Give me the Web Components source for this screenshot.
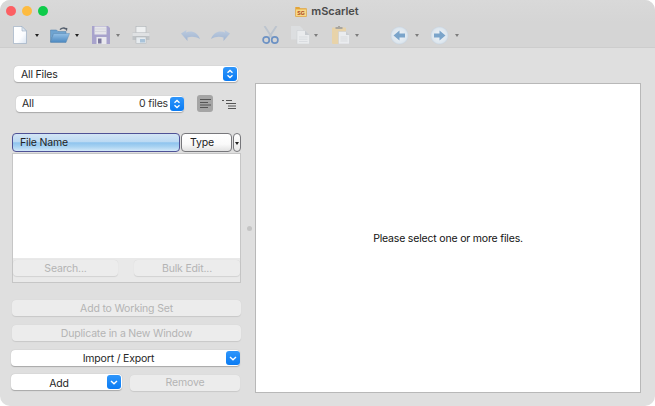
<!DOCTYPE html>
<html lang="en"><head><meta charset="utf-8"><title>mScarlet</title>
<style>
html,body{margin:0;padding:0;background:#fff;width:655px;height:406px;overflow:hidden}
body{font:10.5px/1 Inter,"Liberation Sans",sans-serif;letter-spacing:-.18px;color:#222}
</style></head><body>
<app-window>
  <title-bar slot="top"></title-bar>
  <tool-bar slot="top"></tool-bar>
  <side-panel slot="left"></side-panel>
  <preview-panel slot="right">Please select one or more files.</preview-panel>
</app-window>
<script>
const el=(name,html)=>customElements.define(name,class extends HTMLElement{
  constructor(){super();this.attachShadow({mode:'open'}).innerHTML=typeof html==='function'?html(this):html;}
});
el('app-window',`<style>
:host{display:flex;flex-direction:column;width:655px;height:406px;border-radius:10px;overflow:hidden;background:#dfdfdf}
.main{flex:1;display:flex;min-height:0}
</style><slot name="top"></slot><div class="main"><slot name="left"></slot><slot name="right"></slot></div>`);
el('title-bar',`<style>
:host{display:flex;height:22px;position:relative;align-items:center;justify-content:center;background:linear-gradient(#d9d9d9,#d5d5d5);box-sizing:border-box;padding-top:0}
.lights{position:absolute;left:6px;top:6px;display:flex;gap:6px}
.lights i{width:10px;height:10px;border-radius:50%;display:block}
.t{display:flex;align-items:center;gap:4px;font-weight:600;font-size:11px;letter-spacing:-.05px;color:#4a4a4a;margin-left:-1px}
</style><div class="lights"><i style="background:#fc5f63"></i><i style="background:#fdbb40"></i><i style="background:#0ecb4a"></i></div>
<div class="t"><svg width="12" height="11" viewBox="0 0 12 11"><path d="M.3 1h4l1 1.200h6.400v8.500H.3z" fill="#e3a437"/><rect x="1" y="3.400" width="10" height="6.600" fill="#f7d987"/><text x="6" y="8.500" font-size="5.200" font-weight="700" text-anchor="middle" fill="#a8401c" font-family="Liberation Sans" letter-spacing="0">SG</text></svg><span>mScarlet</span></div>`);
const G=`<defs>
<linearGradient id="pg" x1="0" y1="0" x2="1" y2="1"><stop offset="0" stop-color="#fff"/><stop offset=".6" stop-color="#fbfcfe"/><stop offset="1" stop-color="#d9e4f2"/></linearGradient>
<linearGradient id="fg" x1="0" y1="0" x2="0" y2="1"><stop offset="0" stop-color="#93c0e6"/><stop offset="1" stop-color="#4b88c0"/></linearGradient>
<linearGradient id="ug" x1="0" y1="0" x2="0" y2="1"><stop offset="0" stop-color="#bccbdf"/><stop offset="1" stop-color="#a1b5d1"/></linearGradient>
<radialGradient id="cg" cx=".5" cy=".5" r=".55"><stop offset="0" stop-color="#f0f4f8"/><stop offset=".75" stop-color="#dde6ee"/><stop offset="1" stop-color="#bac8d6"/></radialGradient></defs>`;
const I={
doc:`<svg width="14" height="18" viewBox="0 0 14 18">${G}<path d="M.5.5h8.500l4.500 4.500v12.500H.5z" fill="url(#pg)" stroke="#9fb0c4" stroke-width=".7"/><path d="M9 .5V5h4.500z" fill="#dfe7f1" stroke="#9fb0c4" stroke-width=".6"/></svg>`,
open:`<svg width="20" height="16" viewBox="0 0 20 16">${G}<path d="M.5 3h6l1.500 1.500h8V8H3L.5 15z" fill="#6ea3d0" stroke="#4f7fa8" stroke-width=".5"/><path d="M3.500 6.500h16L16 15.500H.5z" fill="url(#fg)" stroke="#4f7fa8" stroke-width=".4"/><path d="M10 2.600C11.500.8 14 .5 15.600 1.900" fill="none" stroke="#56606e" stroke-width="1.300"/><path d="M14.200.7l3.200.2-.4 3.400z" fill="#56606e"/></svg>`,
save:`<svg width="18" height="18" viewBox="0 0 18 18"><path d="M0 0h16l2 2v16H0z" fill="#a8a3cc"/><rect x="2.500" y=".5" width="12" height="8" fill="#e6e6ea"/><path d="M2.500 3h12M2.500 5.500h12" stroke="#cfcfd8" stroke-width=".7"/><rect x="4.500" y="11" width="10" height="7" fill="#e9e9ee"/><rect x="6" y="12.500" width="3.500" height="5" fill="#7d799f"/></svg>`,
print:`<svg width="18" height="18" viewBox="0 0 18 18"><rect x="4" y=".5" width="10" height="6.500" fill="#eef0f1" stroke="#b0b4b8" stroke-width=".6"/><path d="M.5 6.500h17v7.500H.5z" fill="#bfc3c6"/><rect x=".5" y="7" width="17" height="3" fill="#dfe1e3"/><rect x="4" y="11" width="10" height="6.500" fill="#e6ebef" stroke="#adb1b5" stroke-width=".5"/><rect x="8" y="13" width="5" height="3.500" fill="#a9c3d9"/></svg>`,
undo:`<svg width="19" height="11" viewBox="0 0 19 11">${G}<path d="M0 3.500 5.500 0 5 2.500C10 .5 16 1.500 19 9 15 6.500 10 6.300 6.500 7.500L6.500 11z" fill="url(#ug)"/></svg>`,
redo:`<svg width="19" height="11" viewBox="0 0 19 11">${G}<path d="M19 3.500 13.500 0 14 2.500C9 .5 3 1.500 0 9 4 6.500 9 6.300 12.500 7.500L12.500 11z" fill="url(#ug)"/></svg>`,
cut:`<svg width="17" height="18" viewBox="0 0 17 18"><path d="M2.500 0 10 11.500M14.500 0 7 11.500" stroke="#bcc4ce" stroke-width="1.900" fill="none"/><circle cx="4.200" cy="14" r="3.100" fill="none" stroke="#6d92c4" stroke-width="1.700"/><circle cx="12.800" cy="14" r="3.100" fill="none" stroke="#6d92c4" stroke-width="1.700"/></svg>`,
copy:`<svg width="19" height="18" viewBox="0 0 19 18"><path d="M0 0h9l3 3v10.500H0z" fill="#dcdee0"/><path d="M6 4.500h8l4.500 4.500v9H6z" fill="#e9ebed" stroke="#c8ccd0" stroke-width=".5"/><path d="M14 4.500V9h4.500z" fill="#c6cace"/><path d="M8 11h8.500M8 13.200h8.500M8 15.500h8.500" stroke="#d2d6da" stroke-width=".7"/></svg>`,
paste:`<svg width="18" height="18" viewBox="0 0 18 18"><rect x="0" y="1.500" width="14" height="16.500" rx="1" fill="#e8d3a9"/><path d="M3.500 3V1H6V0h2v1h2.500v2z" fill="#a9a69f"/><path d="M6.500 5.500h7.500l3.500 3.500v9h-11z" fill="#eaecef" stroke="#c8cbcf" stroke-width=".5"/><path d="M14 5.500V9h3.500z" fill="#c8ccd0"/><path d="M8.500 11h7M8.500 13h7M8.500 15h7" stroke="#d2d5d9" stroke-width=".7"/></svg>`,
back:`<svg width="19" height="19" viewBox="0 0 19 19">${G}<circle cx="9.500" cy="9.500" r="9" fill="url(#cg)"/><path d="M3.500 9.500 9.500 4.500V7.500h5.500v4H9.500v3z" fill="#7aa4ca"/></svg>`,
fwd:`<svg width="19" height="19" viewBox="0 0 19 19">${G}<circle cx="9.500" cy="9.500" r="9" fill="url(#cg)"/><path d="M15.500 9.500 9.500 4.500V7.500H4v4h5.500v3z" fill="#7aa4ca"/></svg>`};
el('tool-item',h=>{
  const n=h.getAttribute('icon'),a=h.getAttribute('arrow');
  return `<style>:host{display:flex;align-items:center;width:${h.getAttribute('w')}px;height:24px}
  .box{width:20px;display:flex;justify-content:center;align-items:center;height:24px}
  svg{display:block;filter:blur(.25px)}
  .a{width:0;height:0;border:2.500px solid transparent;border-top:3.500px solid ${a==='dark'?'#222':'#7d7d7d'};border-bottom:0;margin-left:${h.getAttribute('am')||7}px}
  </style><div class="box">${I[n]}</div>${a?'<i class="a"></i>':''}`;
});
const T=[['doc','dark',40,5],['open','dark',41,5],['save','light',40,5],['print','',49],['undo','',30],['redo','',50],['cut','',30],['copy','light',41,4],['paste','light',58,4],['back','light',40,6],['fwd','light',40,6]];
el('tool-bar',`<style>:host{display:flex;height:26px;box-sizing:border-box;padding:1px 0 0 10px;background:#d5d5d5;border-bottom:1px solid #cdcdcd;align-items:center}</style>`+
 T.map(t=>`<tool-item icon="${t[0]}" ${t[1]?`arrow="${t[1]}"`:''} w="${t[2]}" ${t[3]?`am="${t[3]}"`:''}></tool-item>`).join(''));
const updown=`<svg width="8" height="10" viewBox="0 0 8 10" fill="none" stroke="#fff" stroke-width="1.300"><path d="M1.500 3.700 4 1.400l2.500 2.300M1.500 6.300 4 8.600l2.500-2.300"/></svg>`;
const chev=`<svg width="8" height="5" viewBox="0 0 8 5" fill="none" stroke="#fff" stroke-width="1.400"><path d="M1 1l3 2.700L7 1"/></svg>`;
el('mac-select',h=>{
  const w=h.getAttribute('w'),m=h.getAttribute('mode'),c=h.getAttribute('align')==='center',hh=h.getAttribute('h')||16;
  return `<style>:host{display:flex;width:${w}px;height:${hh}px;box-sizing:border-box;background:#fff;border-radius:4px;box-shadow:0 .5px 1px rgba(0,0,0,.25);align-items:center;color:#262626}
  .l{flex:1;padding:${h.getAttribute('pt')||2}px 0 0 ${c?0:(h.getAttribute('pl')||7)}px;text-align:${c?'center':'left'};white-space:nowrap}
  .r{margin-right:2px;padding-top:1px;color:#333}
  .b{width:${h.getAttribute('bw')||14}px;height:${(+hh)-2}px;margin-right:${h.getAttribute('bm')||0}px;border-radius:3px;background:linear-gradient(#2f96fb,#0a7bf3);display:flex;align-items:center;justify-content:center;flex:none}
  </style><div class="l"><slot></slot></div>${h.getAttribute('right')?`<span class="r">${h.getAttribute('right')}</span>`:''}<div class="b">${m==='chev'?chev:updown}</div>`;
});
el('dim-button',h=>`<style>:host{display:flex;box-sizing:border-box;padding-top:2px;width:${h.getAttribute('w')||229}px;height:16px;align-items:center;justify-content:center;background:#ececec;border-radius:4px;color:#b4b4b4;box-shadow:0 .5px 1px rgba(0,0,0,.1)}</style><slot></slot>`);
el('list-head',`<style>
:host{display:flex;gap:1px;height:19px;color:#222}
div{box-sizing:border-box;display:flex;align-items:center;border-radius:4px;border:1px solid #77777b;padding-top:1px}
.n{width:168px;padding-left:7px;border-color:#4f5296;background:linear-gradient(#d3e5f5 0,#bcdaf3 45%,#8fc4ee 52%,#a9d3f2 75%,#d3e8f8 100%)}
.t{width:51px;padding-left:8px;background:linear-gradient(#fff,#fafafa 60%,#e2e2e2)}
.d{width:8px;justify-content:center;background:linear-gradient(#fff,#e8e8e8)}
i{border:2px solid transparent;border-top:3px solid #222;border-bottom:0}
</style><div class="n">File Name</div><div class="t">Type</div><div class="d"><i></i></div>`);
el('list-box',`<style>
:host{display:flex;flex-direction:column;width:229px;height:130px;box-sizing:border-box;border:1px solid #c6c6c6;background:#fff}
.b{flex:1}
.f{display:flex;justify-content:space-between;height:24px;box-sizing:border-box;padding:2px 0 0 0;background:#e9e9e9}
</style><div class="b"></div><div class="f"><dim-button w="105">Search...</dim-button><dim-button w="106">Bulk Edit...</dim-button></div>`);
el('view-toggle',`<style>
:host{display:flex;align-items:center;margin-left:13px;gap:9px}
.on{width:16px;height:17px;background:#a5a5a5;border-radius:3px;display:flex;align-items:center;justify-content:center}
</style><div class="on"><svg width="11" height="9" viewBox="0 0 11 9" stroke="#555" stroke-width="1"><path d="M0 .5h11M0 3.500h8M0 6h11M0 8.500h8"/></svg></div>
<svg width="14" height="10" viewBox="0 0 14 10" stroke="#555" stroke-width="1"><path d="M0 1.500h2M4 1.500h6M4 4.500h10M6 7h8M6 9.500h8"/></svg>`);
el('side-panel',`<style>
:host{display:flex;flex-direction:column;width:255px;flex:none;box-sizing:border-box;position:relative;padding:18px 0 0 0}
.row{display:flex;align-items:center}
.dot{position:absolute;left:247px;top:178px;width:5px;height:5px;border-radius:50%;background:#c4c4c4}
</style>
<mac-select w="224" bm="1" style="margin-left:14px" mode="updown">All Files</mac-select>
<div class="row" style="margin:13px 0 0 16px"><mac-select w="168" pl="6" pt="1" right="0 files" mode="updown">All</mac-select><view-toggle></view-toggle></div>
<list-head style="margin:21px 0 0 12px"></list-head>
<list-box style="margin:1px 0 0 12px"></list-box>
<dim-button style="margin:17px 0 0 12px">Add to Working Set</dim-button>
<dim-button style="margin:9px 0 0 12px">Duplicate in a New Window</dim-button>
<mac-select w="229" style="margin:9px 0 0 11px" mode="chev" align="center">Import / Export</mac-select>
<div class="row" style="margin:8px 0 0 11px;gap:8px;align-items:flex-start"><mac-select w="111" bm="1" pt="4" mode="chev" align="center">Add</mac-select><dim-button w="110" style="margin-top:1px;padding-top:0">Remove</dim-button></div>
<i class="dot"></i>`);
el('preview-panel',`<style>
:host{display:flex;width:386px;height:310px;margin:35px 0 0 0;padding-top:2px;box-sizing:border-box;background:#fff;border:1px solid #b8b8b8;align-items:center;justify-content:center;color:#111}
</style><slot></slot>`);
</script>
</body></html>
